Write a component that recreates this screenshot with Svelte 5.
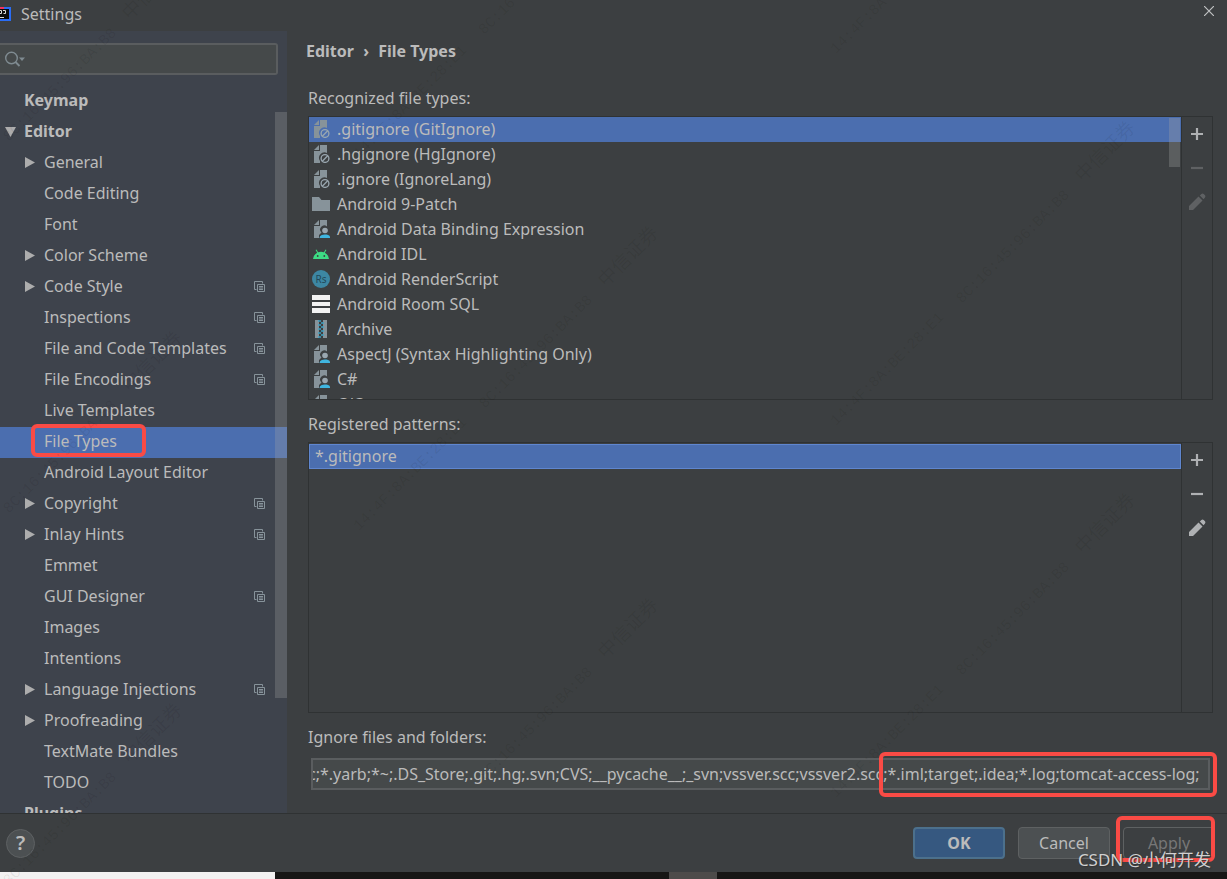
<script lang="ts">
  type Node = { label: string; level?: number; arrow?: 'open' | 'closed'; project?: boolean };

  const tree: Node[] = [
    { label: 'Keymap', level: 0 },
    { label: 'Editor', level: 0, arrow: 'open' },
    { label: 'General', arrow: 'closed' },
    { label: 'Code Editing' },
    { label: 'Font' },
    { label: 'Color Scheme', arrow: 'closed' },
    { label: 'Code Style', arrow: 'closed', project: true },
    { label: 'Inspections', project: true },
    { label: 'File and Code Templates', project: true },
    { label: 'File Encodings', project: true },
    { label: 'Live Templates' },
    { label: 'File Types' },
    { label: 'Android Layout Editor' },
    { label: 'Copyright', arrow: 'closed', project: true },
    { label: 'Inlay Hints', arrow: 'closed', project: true },
    { label: 'Emmet' },
    { label: 'GUI Designer', project: true },
    { label: 'Images' },
    { label: 'Intentions' },
    { label: 'Language Injections', arrow: 'closed', project: true },
    { label: 'Proofreading', arrow: 'closed' },
    { label: 'TextMate Bundles' },
    { label: 'TODO' },
    { label: 'Plugins', level: 0 },
  ];

  const fileTypes = [
    { label: '.gitignore (GitIgnore)', icon: 'ignore' },
    { label: '.hgignore (HgIgnore)', icon: 'ignore' },
    { label: '.ignore (IgnoreLang)', icon: 'ignore' },
    { label: 'Android 9-Patch', icon: 'folder' },
    { label: 'Android Data Binding Expression', icon: 'user' },
    { label: 'Android IDL', icon: 'android' },
    { label: 'Android RenderScript', icon: 'rs' },
    { label: 'Android Room SQL', icon: 'sql' },
    { label: 'Archive', icon: 'archive' },
    { label: 'AspectJ (Syntax Highlighting Only)', icon: 'user' },
    { label: 'C#', icon: 'user' },
    { label: 'C/C++', icon: 'user' },
  ];

  // diagonal workstation stamps, start points on a repeating grid
  const stamps = [
    { x: 9, y: 138, mac: '8C:16:45:96:BA:B8', org: '中信证券' },
    { x: 9, y: 510, mac: '8C:16:45:96:BA:B8', org: '中信证券' },
    { x: 9, y: 882, mac: '8C:16:45:96:BA:B8', org: '中信证券' },
    { x: 485, y: 33, mac: '8C:16:45:96:BA:B8', org: '' },
    { x: 485, y: 405, mac: '8C:16:45:96:BA:B8', org: '中信证券' },
    { x: 485, y: 777, mac: '8C:16:45:96:BA:B8', org: '中信证券' },
    { x: 962, y: 300, mac: '8C:16:45:96:BA:B8', org: '中信证券' },
    { x: 962, y: 672, mac: '8C:16:45:96:BA:B8', org: '中信证券' },
    { x: 360, y: 157, mac: '14:4F:8A:BE:28:E1', org: '' },
    { x: 360, y: 529, mac: '14:4F:8A:BE:28:E1', org: '' },
    { x: 837, y: 52, mac: '14:4F:8A:BE:28:E1', org: '' },
    { x: 837, y: 424, mac: '14:4F:8A:BE:28:E1', org: '' },
    { x: 837, y: 796, mac: '14:4F:8A:BE:28:E1', org: '' },
  ];

  let page = $state('File Types');
  let fileType = $state('.gitignore (GitIgnore)');
  let query = $state('');
  let ignored = $state(
    'c;*.yarb;*~;.DS_Store;.git;.hg;.svn;CVS;__pycache__;_svn;vssver.scc;vssver2.scc;*.iml;target;.idea;*.log;tomcat-access-log;',
  );

  // keep the tail of the long pattern list in view
  function scrollToEnd(el: HTMLInputElement) {
    el.scrollLeft = el.scrollWidth;
  }
</script>

{#snippet typeIcon(name: string)}
  <svg width="18" height="18" viewBox="0 0 18 18" aria-hidden="true">
    {#if name === 'ignore'}
      <path d="M8 0h7v8a5.500 5.500 0 0 0-7 8v2H2V6h6z" fill="#87939a" />
      <path d="M7 0v5H2z" fill="#87939a" />
      <circle cx="13" cy="13.500" r="3.900" fill="none" stroke="#9aa7b0" stroke-width="1.300" />
      <path d="M10.300 16.200l5.400-5.400" stroke="#9aa7b0" stroke-width="1.300" />
    {:else if name === 'user'}
      <path d="M8 0h7v6.500a4 4 0 0 0-5.500 6L7 15v3H2V6h6z" fill="#87939a" />
      <path d="M7 0v5H2z" fill="#87939a" />
      <circle cx="13" cy="10.500" r="2.800" fill="#9aa7b0" />
      <path d="M7.500 18.500c0-3 2.500-4 5.500-4s5.500 1 5.500 4z" fill="#40b6e0" />
    {:else if name === 'folder'}
      <path d="M0 2h7l2.500 3H18v11H0z" fill="#87939a" />
    {:else if name === 'android'}
      <path d="M1 14a8 8 0 0 1 4.200-6.300L3.600 5l.8-.5 1.700 2.800a8.500 8.500 0 0 1 5.800 0l1.700-2.800.8.5-1.600 2.700A8 8 0 0 1 17 14z" fill="#3ddc84" />
      <circle cx="5.700" cy="11" r="0.900" fill="#3c3f41" />
      <circle cx="12.300" cy="11" r="0.900" fill="#3c3f41" />
    {:else if name === 'rs'}
      <circle cx="9" cy="9" r="9" fill="#3d87a3" />
      <text x="9" y="12.500" text-anchor="middle" font-size="10" fill="#22495a">Rs</text>
    {:else if name === 'sql'}
      <path d="M0 0h18v5H0zM0 7h18v4H0zM0 13h18v5H0z" fill="#f2f2f2" />
    {:else}
      <path d="M3 0h4v18H3zM11 0h4v18h-4z" fill="#87939a" />
      <path d="M6 1h3M9 3h3M6 5h3M9 7h3M6 9h3M9 11h3M6 13h3M9 15h3M6 17h3" stroke="#3fa2c4" stroke-width="1.500" />
    {/if}
  </svg>
{/snippet}

{#snippet tools(what: string, disabled: boolean)}
  <div class="tools">
    <button aria-label="Add {what}">
      <svg width="18" height="18" viewBox="0 0 18 18"><path d="M3 9h12M9 3v12" stroke="#afb1b3" stroke-width="2.200" /></svg>
    </button>
    <button aria-label="Remove {what}" {disabled}>
      <svg width="18" height="18" viewBox="0 0 18 18"><path d="M3 9h12" stroke="#afb1b3" stroke-width="2.200" /></svg>
    </button>
    <button aria-label="Edit {what}" {disabled}>
      <svg width="18" height="18" viewBox="0 0 18 18">
        <path d="M10.500 3.500l4 4L5 17H1v-4zM11.800 2.500l1.600-1.500q1.200-.9 2.300 0l1.300 1.300q.9 1 0 2.200L15.500 6.200z" fill="#afb1b3" />
      </svg>
    </button>
  </div>
{/snippet}

<div class="window">
  <header>
    <svg width="11" height="14" viewBox="0 0 11 14" aria-hidden="true">
      <path d="M0 0h11v14H0z" fill="#2a6df4" />
      <path d="M0 0h4v2H0z" fill="#f5315d" />
      <path d="M0 2h9v10H0z" fill="#0c0c0c" />
      <path d="M0 3.500h1.500v3H0M3 3.500h2.500v3H3.500M0 10.500h4" fill="none" stroke="#ddd" />
    </svg>
    <h1>Settings</h1>
    <button class="close" aria-label="Close">
      <svg width="10" height="10" viewBox="0 0 10 10"><path d="M0 0l10 10M10 0L0 10" stroke="#c0c2c3" stroke-width="1.200" /></svg>
    </button>
  </header>

  <div class="content">
    <aside>
      <div class="search">
        <svg width="22" height="18" viewBox="0 0 22 18" aria-hidden="true">
          <circle cx="7.500" cy="8" r="5.800" fill="none" stroke="#7f8b91" stroke-width="1.400" />
          <path d="M11.500 12l4 4" stroke="#7f8b91" stroke-width="1.800" />
          <path d="M15 7.500h6l-3 3.500z" fill="#7f8b91" />
        </svg>
        <input type="text" aria-label="Search settings" bind:value={query} />
      </div>
      <nav>
        {#each tree as node}
          <button
            class="node"
            class:top={node.level === 0}
            class:selected={node.label === page}
            onclick={() => (page = node.label)}
          >
            <span class="arrow">
              {#if node.arrow === 'open'}
                <svg width="11" height="10" viewBox="0 0 11 10"><path d="M0 0h11L5.500 10z" fill="#adadad" /></svg>
              {:else if node.arrow === 'closed'}
                <svg width="10" height="11" viewBox="0 0 10 11"><path d="M0 0v11l10-5.500z" fill="#adadad" /></svg>
              {/if}
            </span>
            <span class="label">
              {node.label}
              {#if node.label === 'File Types'}<span class="mark"></span>{/if}
            </span>
            {#if node.project}
              <svg width="11" height="11" viewBox="0 0 11 11" aria-hidden="true">
                <path d="M2.500 8.500h-2v-8h8v2M3.500 3.500h7v7h-7zM5 5.500h4M5 7h4M5 8.500h4" fill="none" stroke="#87939a" />
              </svg>
            {/if}
          </button>
        {/each}
        <div class="thumb"></div>
      </nav>
    </aside>

    <main>
      <h2>Editor <span>›</span> File Types</h2>

      <h3>Recognized file types:</h3>
      <section class="panel types">
        <ul>
          {#each fileTypes as type}
            <li>
              <button class:selected={type.label === fileType} onclick={() => (fileType = type.label)}>
                {@render typeIcon(type.icon)}{type.label}
              </button>
            </li>
          {/each}
        </ul>
        <div class="list-thumb"></div>
        {@render tools('file type', true)}
      </section>

      <h3>Registered patterns:</h3>
      <section class="panel patterns">
        <ul>
          <li><button class="selected">*.gitignore</button></li>
        </ul>
        {@render tools('pattern', false)}
      </section>

      <label for="ignored">Ignore files and folders:</label>
      <div class="ignored">
        <input id="ignored" type="text" bind:value={ignored} use:scrollToEnd />
        <div class="mark"></div>
      </div>
    </main>
  </div>

  <footer>
    <button class="help" aria-label="Help">?</button>
    <button class="action ok">OK</button>
    <button class="action">Cancel</button>
    <div class="apply">
      <button class="action" disabled>Apply</button>
      <div class="mark"></div>
    </div>
    <div class="credit">CSDN @小何开发</div>
  </footer>
  <div class="taskbar"><i></i><b></b></div>

  <div class="stamps" aria-hidden="true">
    {#each stamps as s}
      <span style="left: {s.x}px; top: {s.y}px">{s.mac}{#if s.org}<em>{s.org}</em>{/if}</span>
    {/each}
  </div>
</div>

<style>
  :global(body) { background: #3c3f41; }
  .window {
    position: relative; display: flex; flex-direction: column;
    height: 100vh; overflow: hidden;
    background: #3c3f41; color: #bbb;
    font: 16px/24px "Noto Sans", "Noto Sans CJK SC", sans-serif;
  }
  .window * { box-sizing: border-box; }
  button, input { font: inherit; color: inherit; padding: 0; margin: 0; border: 0; background: none; }
  h1, h2, h3, ul { margin: 0; padding: 0; font: inherit; list-style: none; }
  svg { display: block; flex: none; }

  header { display: flex; align-items: center; height: 31px; flex: none; padding-bottom: 3px; }
  h1 { margin-left: 10px; flex: 1; }
  .close { padding: 0 13px 6px; }

  .content { display: flex; flex: 1; min-height: 0; }
  aside {
    width: 287px; flex: none; display: flex; flex-direction: column;
    background: #3e434c; padding-top: 12px;
  }
  .search {
    display: flex; align-items: center; height: 32px; flex: none; margin: 0 9px 11px 0;
    background: #45494a; border: 2px solid #5a5d5f; border-left: 0; border-radius: 0 3px 3px 0;
    padding-left: 4px;
  }
  .search input { flex: 1; min-width: 0; outline: 0; }
  nav { position: relative; flex: 1; min-height: 0; overflow: hidden; }
  .node {
    display: flex; align-items: center; width: 100%; height: 31px;
    padding: 0 22px 2px 0; text-align: left;
  }
  .arrow { width: 44px; padding-left: 25px; flex: none; }
  .top { font-weight: 700; }
  .top .arrow { width: 24px; padding-left: 5px; }
  .label { position: relative; flex: 1; padding-bottom: 2px; }
  .selected { background: #4b6eaf; }
  .thumb {
    position: absolute; right: 0; top: 26px; width: 12px; height: 586px;
    background: rgba(166, 166, 166, 0.28);
  }

  main { flex: 1; min-width: 0; display: flex; flex-direction: column; padding: 8px 14px 23px 21px; }
  h2 { font-weight: 700; margin: 0 0 23px -2px; }
  h2 span { margin: 0 5px; }
  h3, label { flex: none; }
  .panel { position: relative; display: flex; border: 1px solid #2f3233; min-height: 0; overflow: hidden; margin: 6px 0 12px; }
  .types { flex: 284 1 0; }
  .patterns { flex: 271 1 0; }
  .panel ul { flex: 1; min-width: 0; overflow: hidden; }
  .panel li button {
    display: flex; align-items: center; gap: 7px; width: 100%; height: 25px;
    padding: 0 0 2px 3px;
  }
  .patterns ul { padding-top: 1px; }
  .patterns li button { border: 1px solid #5f86cf; padding: 0 0 0 5px; }
  .tools {
    width: 31px; flex: none; border-left: 1px solid #2f3233;
    display: flex; flex-direction: column; align-items: center; gap: 16px; padding-top: 8px;
  }
  .tools button:disabled { opacity: 0.3; }
  .list-thumb {
    position: absolute; right: 32px; top: 1px; width: 11px; height: 49px;
    background: rgba(166, 166, 166, 0.3);
  }
  .ignored { position: relative; margin: 9px 3px 0; }
  .ignored input {
    display: block; width: 100%; height: 32px; padding: 0 8px 0 0;
    background: #45494a; border: 2px solid #5a5d5f; outline: 0;
  }
  .mark { position: absolute; border: 4px solid #fa4b45; border-radius: 6px; pointer-events: none; }
  .label .mark { left: -13px; top: -5px; width: 115px; height: 33px; }
  .ignored .mark { right: -7px; top: -6px; width: 338px; height: 45px; }

  footer {
    position: relative; display: flex; align-items: center; gap: 13px; height: 59px; flex: none;
    padding: 0 12px 0 6px; border-top: 1px solid #2f3233;
  }
  .help {
    width: 29px; height: 29px; margin-right: auto; border-radius: 50%;
    background: #4c5052; border: 1px solid #5e6163; font-size: 20px; font-weight: 600;
  }
  .action {
    display: block; width: 92px; height: 32px; border-radius: 4px;
    background: #4c5052; border: 1px solid #5e6162;
  }
  .ok { background: #365880; border: 2px solid #4c708c; font-weight: 700; }
  .apply { position: relative; }
  .apply .action { background: none; color: #777; }
  .apply .mark { left: -7px; top: -11px; width: 99px; height: 46px; }
  .credit {
    position: absolute; right: 16px; bottom: 0; font-size: 17px;
    color: #d0d0d0; text-shadow: 1px 1px 1px #333;
  }
  .taskbar { display: flex; height: 7px; flex: none; background: #171615; }
  .taskbar i { width: 275px; background: #f2f1f1; margin-right: 394px; }
  .taskbar b { width: 48px; background: #4d4b4a; }

  .stamps { position: absolute; inset: 0; overflow: hidden; pointer-events: none; color: rgba(0, 0, 0, 0.07); }
  .stamps span {
    position: absolute; margin: -12px 0 0 -3px; white-space: nowrap;
    transform: rotate(-45deg); transform-origin: 0 50%;
    font-family: "Liberation Mono", "Noto Sans CJK SC", monospace; font-size: 15px;
  }
  .stamps em { margin-left: 18px; font-size: 19px; font-style: normal; }
</style>
